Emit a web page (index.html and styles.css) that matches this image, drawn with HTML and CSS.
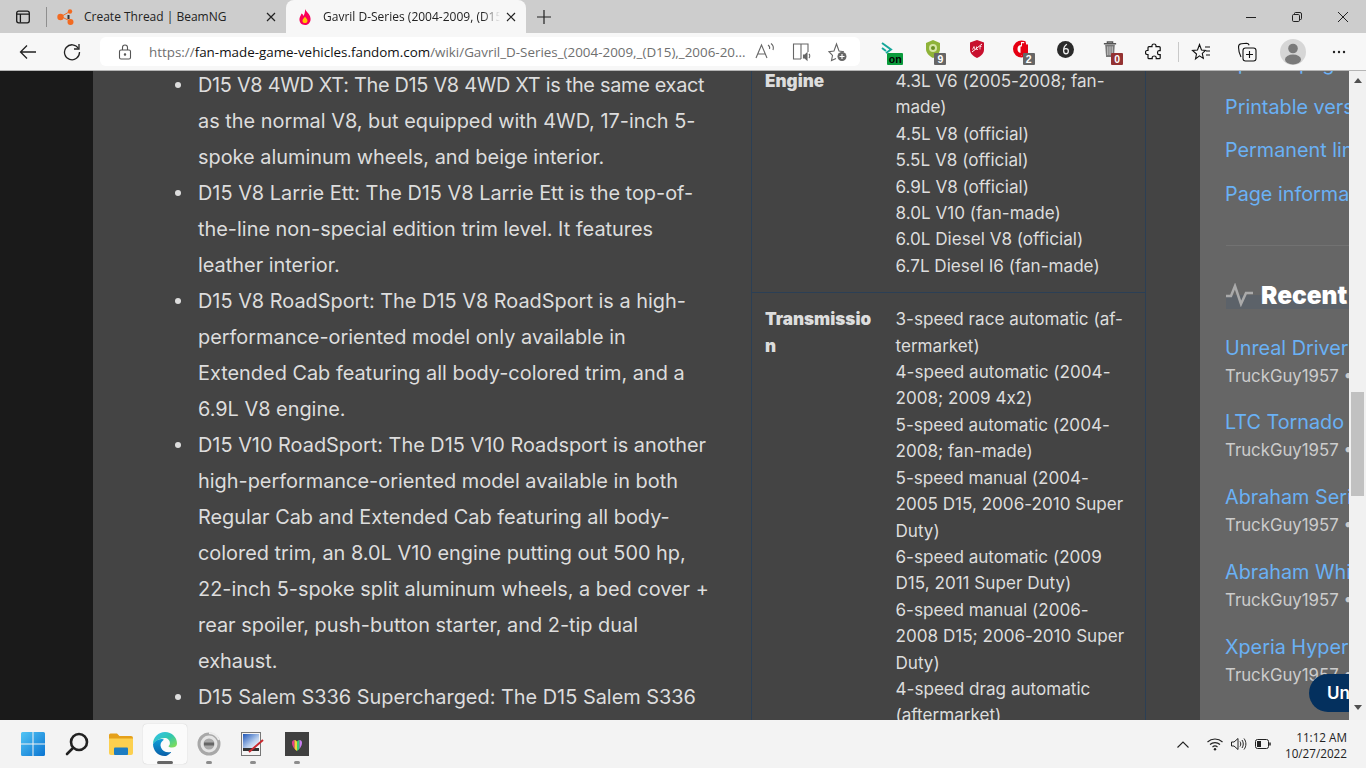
FILE: index.html
```html
<!DOCTYPE html>
<html lang="en">
<head>
<meta charset="utf-8">
<title>Gavril D-Series</title>
<link rel="stylesheet" href="styles.css">
</head>
<body>
<div class="tabstrip">
  <div class="strip-btn">
    <svg width="16" height="16" viewBox="0 0 16 16" fill="none" stroke="#1a1a1a" stroke-width="1.3"><rect x="1.7" y="2.2" width="12.6" height="11.6" rx="2"/><path d="M2 5.2h12M5.4 5.2v8.4"/></svg>
  </div>
  <div class="strip-sep"></div>
  <div class="tab">
    <svg class="favicon" width="18" height="18" viewBox="0 0 18 18"><circle cx="3.5" cy="9" r="3.2" fill="#f26a21"/><circle cx="13" cy="3.5" r="2.2" fill="#f26a21"/><circle cx="13.5" cy="14" r="3" fill="#f26a21"/><path d="M5 8l7-4M6 9.500l6 3" stroke="#f26a21" stroke-width="1"/><path d="M10.500 7h2v4h-2z" fill="#333"/></svg>
    <span class="tab-title">Create Thread | BeamNG</span>
    <svg class="tab-x" width="10" height="10" viewBox="0 0 10 10" stroke="#222" stroke-width="1.2"><path d="M1 1l8 8M9 1l-8 8"/></svg>
  </div>
  <div class="tab tab-active">
    <svg class="favicon" width="18" height="18" viewBox="0 0 18 18"><path d="M9 1c1 3 5 4.500 5.500 9.200C15 14 12.500 17 9 17s-6-2.800-5.500-6.500C3.800 8.500 5 7.500 5.500 5.500 6.700 6 7.200 7 7.300 8 8.500 6.500 9.300 3.500 9 1z" fill="#fa005a"/><path d="M9 8.500c.5 1.500 2.500 2.200 2.500 4.200 0 1.400-1.100 2.300-2.500 2.300s-2.500-.9-2.500-2.300c0-2 2-2.700 2.500-4.200z" fill="#ffc500"/></svg>
    <span class="tab-title">Gavril D-Series (2004-2009, (D15)</span>
    <svg class="tab-x" width="10" height="10" viewBox="0 0 10 10" stroke="#222" stroke-width="1.2"><path d="M1 1l8 8M9 1l-8 8"/></svg>
  </div>
  <div class="strip-btn new-tab">
    <svg width="16" height="16" viewBox="0 0 16 16" stroke="#222" stroke-width="1.2"><path d="M8 1v14M1 8h14"/></svg>
  </div>
  <div class="win-controls">
    <div class="win-btn"><svg width="10" height="10" viewBox="0 0 10 10" stroke="#222"><path d="M0 5.500h10"/></svg></div>
    <div class="win-btn"><svg width="10" height="10" viewBox="0 0 10 10" fill="none" stroke="#222"><rect x=".5" y="2.500" width="7" height="7" rx="1.200"/><path d="M2.500 2.500v-1a1 1 0 0 1 1-1h4.500a1.500 1.500 0 0 1 1.500 1.500v4.500a1 1 0 0 1-1 1h-1"/></svg></div>
    <div class="win-btn"><svg width="10" height="10" viewBox="0 0 10 10" stroke="#222"><path d="M0 0l10 10M10 0l-10 10"/></svg></div>
  </div>
</div>

<div class="toolbar">
  <div class="nav-btn nav-back"><svg width="18" height="16" viewBox="0 0 18 16" fill="none" stroke="#222" stroke-width="1.300"><path d="M17 8H1.500M8 1.500L1.500 8 8 14.500"/></svg></div>
  <div class="nav-btn"><svg width="18" height="18" viewBox="0 0 18 18" fill="none" stroke="#222" stroke-width="1.300"><path d="M15.500 5.500A7.500 7.500 0 1 0 16.500 9"/><path d="M16 1v5h-5"/></svg></div>
  <div class="address">
    <svg class="lock" width="14" height="16" viewBox="0 0 14 16" fill="none" stroke="#555" stroke-width="1.100"><rect x="1.500" y="6" width="11" height="9" rx="1.500"/><path d="M4.500 6V3.500a2.500 2.500 0 0 1 5 0V6"/><circle cx="7" cy="10.500" r=".7" fill="#555"/></svg>
    <span class="url"><span class="url-dim">https://</span>fan-made-game-vehicles.fandom.com<span class="url-dim">/wiki/Gavril_D-Series_(2004-2009,_(D15),_2006-20...</span></span>
    <div class="addr-icons">
      <div class="addr-icon"><svg width="22" height="20" viewBox="0 0 22 20" fill="none" stroke="#666" stroke-width="1.100"><path d="M1 16L6.500 3l5.500 13M3 12h7"/><path d="M13 3c1.500 1 2 2.500 1.500 4M16 1.500c2 1.500 2.800 4 2 6.500"/></svg></div>
      <div class="addr-icon"><svg width="20" height="20" viewBox="0 0 20 20" fill="none" stroke="#666" stroke-width="1.100"><path d="M9 17H1.500V2H16v8M9 2v15"/><path d="M11.500 13h1.500l2-2v7l-2-2h-1.500z" fill="#666"/><path d="M17 12c1 1 1 3 0 4"/></svg></div>
      <div class="addr-icon"><svg width="20" height="20" viewBox="0 0 20 20" fill="none" stroke="#666" stroke-width="1.100"><path d="M8 16.500l-4.500 2 1-5L1 9.700l5-.7L8.500 2l2.500 7 5 .7"/><circle cx="14" cy="14.500" r="4.500" fill="#666" stroke="none"/><path d="M14 12v5M11.500 14.500h5" stroke="#fff"/></svg></div>
    </div>
  </div>
  <div class="ext-group">
    <div class="ext">
      <svg width="16" height="14" viewBox="0 0 16 14" fill="none" stroke="#16a79a" stroke-width="2"><path d="M1 1l9 6.500L5 11M1 6l4 3"/></svg>
      <span class="badge badge-green">on</span>
    </div>
    <div class="ext">
      <svg width="16" height="18" viewBox="0 0 16 18"><path d="M8 0l7 3v6c0 4-3 7-7 9-4-2-7-5-7-9V3z" fill="#8fb339"/><circle cx="8" cy="8" r="4" fill="#d6e6a6"/><circle cx="8" cy="8" r="2" fill="#6a8f23"/></svg>
      <span class="badge badge-grey">9</span>
    </div>
    <div class="ext">
      <svg width="16" height="18" viewBox="0 0 16 18"><path d="M8 0l7 2.500v7c0 4-3 6.500-7 8.500-4-2-7-4.500-7-8.500v-7z" fill="#c8102e"/><path d="M3 12L13 4" stroke="#fff" stroke-width="1"/><path d="M3.500 9.500l1.500-3 1 3M7.500 6.500v3H9M12.500 6.500H11v3" stroke="#fff" stroke-width=".8" fill="none"/></svg>
    </div>
    <div class="ext">
      <svg width="18" height="18" viewBox="0 0 18 18"><circle cx="8.500" cy="9" r="8.500" fill="#e60012"/><circle cx="8.500" cy="9" r="4" fill="#fff"/><path d="M8 2h10v14H8z" fill="#f7f7f7"/><path d="M7.500 15V7.500c0-1.500 1.500-1.500 1.500-.5V4c0-1.500 2-1.500 2 0V3c0-1.500 2-1.500 2 0v2c0-1 2-1 2 0v8l-2 3H9z" fill="#e60012"/></svg>
      <span class="badge badge-grey">2</span>
    </div>
    <div class="ext">
      <svg width="17" height="17" viewBox="0 0 18 18"><circle cx="9" cy="9" r="9" fill="#2b2b2b"/><path d="M10.500 3.500C8 5 7 7.500 7 10c0 2 1 3.500 2.500 3.500S12 12.200 12 10.500 11 8 9.500 8 7.500 9 7.500 9" fill="none" stroke="#eee" stroke-width="1.400"/></svg>
    </div>
    <div class="ext">
      <svg width="14" height="18" viewBox="0 0 16 20"><path d="M1 4h14M5 4V2h6v2" stroke="#555" stroke-width="1.500" fill="none"/><path d="M2.500 5h11l-1 14h-9z" fill="#777"/><path d="M5.500 7v10M8 7v10M10.500 7v10" stroke="#ddd" stroke-width="1"/></svg>
      <span class="badge badge-red">0</span>
    </div>
    <div class="ext ext-plain">
      <svg width="18" height="18" viewBox="0 0 18 18" fill="none" stroke="#111" stroke-width="1.200"><path d="M7 2.500c0-2 4-2 4 0v1.200h3.200a1 1 0 0 1 1 1v3h-1.200c-2 0-2 4 0 4h1.200v3a1 1 0 0 1-1 1h-3v-1.200c0-2-4-2-4 0v1.200H4a1 1 0 0 1-1-1v-3.200H2c-2 0-2-4 0-4h1V4.700a1 1 0 0 1 1-1h3z"/></svg>
    </div>
  </div>
  <div class="tool-sep"></div>
  <div class="tool-group">
    <div class="tool"><svg width="20" height="18" viewBox="0 0 20 18" fill="none" stroke="#111" stroke-width="1.100"><path d="M8.500 1.500L10.500 7l4 .4-3.200 3 1 5-3.800-2.500L4.500 16l1-5-4-3.500 5-.5z"/><path d="M14 4h5M15 8h4M15 12h4"/></svg></div>
    <div class="tool"><svg width="20" height="20" viewBox="0 0 20 20" fill="none" stroke="#111" stroke-width="1.100"><path d="M4 15C2.500 12 1.500 8 1.500 5c0-2 1-3 3-3.200l5-.5c1.500 0 2.200.6 2.700 2"/><rect x="6" y="6" width="13" height="13" rx="2.500"/><path d="M12.500 9v7M9 12.500h7"/></svg></div>
    <div class="tool"><svg width="26" height="26" viewBox="0 0 26 26"><circle cx="13" cy="13" r="13" fill="#d6d6d6"/><circle cx="13" cy="9.500" r="4.800" fill="#7a7a7a"/><ellipse cx="13" cy="20.500" rx="8" ry="5" fill="#7a7a7a"/></svg></div>
    <div class="tool"><svg width="14" height="4" viewBox="0 0 14 4" fill="#222"><circle cx="2" cy="2" r="1.200"/><circle cx="7" cy="2" r="1.200"/><circle cx="12" cy="2" r="1.200"/></svg></div>
  </div>
</div>

<main class="viewport">
  <div class="gutter"></div>
  <div class="page">
    <article class="article">
      <ul class="trims">
        <li><span class="tight">D15 V8 4WD XT: The D15 V8 4WD XT is the same exact</span><br>as the normal V8, but equipped with 4WD, 17-inch 5-<br>spoke aluminum wheels, and beige interior.</li>
        <li>D15 V8 Larrie Ett: The D15 V8 Larrie Ett is the top-of-<br>the-line non-special edition trim level. It features<br>leather interior.</li>
        <li>D15 V8 RoadSport: The D15 V8 RoadSport is a high-<br>performance-oriented model only available in<br>Extended Cab featuring all body-colored trim, and a<br>6.9L V8 engine.</li>
        <li>D15 V10 RoadSport: The D15 V10 Roadsport is another<br>high-performance-oriented model available in both<br>Regular Cab and Extended Cab featuring all body-<br>colored trim, an 8.0L V10 engine putting out 500 hp,<br>22-inch 5-spoke split aluminum wheels, a bed cover +<br>rear spoiler, push-button starter, and 2-tip dual<br>exhaust.</li>
        <li>D15 Salem S336 Supercharged: The D15 Salem S336</li>
      </ul>
    </article>
    <table class="specs">
      <tr>
        <th>Engine</th>
        <td>4.3L V6 (2005-2008; fan-<br>made)<br>4.5L V8 (official)<br>5.5L V8 (official)<br>6.9L V8 (official)<br>8.0L V10 (fan-made)<br>6.0L Diesel V8 (official)<br>6.7L Diesel I6 (fan-made)</td>
      </tr>
      <tr>
        <th>Transmissio<br>n</th>
        <td>3-speed race automatic (af-<br>termarket)<br>4-speed automatic (2004-<br>2008; 2009 4x2)<br>5-speed automatic (2004-<br>2008; fan-made)<br>5-speed manual (2004-<br>2005 D15, 2006-2010 Super<br>Duty)<br>6-speed automatic (2009<br>D15, 2011 Super Duty)<br>6-speed manual (2006-<br>2008 D15; 2006-2010 Super<br>Duty)<br>4-speed drag automatic<br>(aftermarket)</td>
      </tr>
    </table>
    <aside class="rail">
      <ul class="tools-list">
        <li><a>Special pages</a></li>
        <li><a>Printable version</a></li>
        <li><a>Permanent link</a></li>
        <li><a>Page information</a></li>
      </ul>
      <hr class="rail-rule">
      <h2 class="recent-title">
        <svg width="27" height="24" viewBox="0 0 27 24" fill="none" stroke="#aaa" stroke-width="2.500"><path d="M0 13h5l4-10 6 18 5-11h7"/></svg>
        <span class="recent-text">Recent Wiki Activity</span>
      </h2>
      <div class="recent-item"><a>Unreal Driver</a><span>TruckGuy1957 • 1 day ago</span></div>
      <div class="recent-item"><a>LTC Tornado</a><span>TruckGuy1957 • 1 day ago</span></div>
      <div class="recent-item"><a>Abraham Series</a><span>TruckGuy1957 • 1 day ago</span></div>
      <div class="recent-item"><a>Abraham White</a><span>TruckGuy1957 • 1 day ago</span></div>
      <div class="recent-item"><a>Xperia Hyper</a><span>TruckGuy1957 • 1 day ago</span></div>
    </aside>
    <div class="float-pill">Unmute</div>
  </div>
  <div class="scrollbar">
    <div class="arrow arrow-up"></div>
    <div class="thumb"></div>
    <div class="arrow arrow-down"></div>
  </div>
</main>

<footer class="taskbar">
  <div class="task-apps">
    <div class="app">
      <svg width="24" height="24" viewBox="0 0 24 24"><defs><linearGradient id="win" x1="0" y1="0" x2="1" y2="1"><stop offset="0" stop-color="#52c5f5"/><stop offset="1" stop-color="#0a74d1"/></linearGradient></defs><path d="M0 1.500A1.500 1.500 0 0 1 1.500 0h10v11.500H0zM12.500 0h10A1.500 1.500 0 0 1 24 1.500v10H12.500zM0 12.500h11.500V24h-10A1.500 1.500 0 0 1 0 22.500zM12.500 12.500H24v10a1.500 1.500 0 0 1-1.500 1.500h-10z" fill="url(#win)"/></svg>
    </div>
    <div class="app">
      <svg width="24" height="24" viewBox="0 0 24 24" fill="none" stroke="#222" stroke-width="2.600"><circle cx="14" cy="10" r="8"/><path d="M8 16l-6 6" stroke-linecap="round"/></svg>
    </div>
    <div class="app">
      <svg width="24" height="22" viewBox="0 0 24 22"><path d="M0 2a1.500 1.500 0 0 1 1.500-1.500H8l2.500 2.500H22a2 2 0 0 1 2 2v1H0z" fill="#e5a01a"/><path d="M0 5.500h24V20a2 2 0 0 1-2 2H2a2 2 0 0 1-2-2z" fill="#fcd04f"/><rect x="5" y="14.500" width="14" height="7.500" rx="1" fill="#1d7dc2"/></svg>
    </div>
    <div class="app app-active">
      <svg width="24" height="24" viewBox="0 0 24 24"><defs><linearGradient id="edgeA" x1="0" y1="0" x2="1" y2="1"><stop offset="0" stop-color="#35c1f1"/><stop offset=".5" stop-color="#2fc7b0"/><stop offset="1" stop-color="#8fe04a"/></linearGradient><linearGradient id="edgeB" x1="0" y1="0" x2="0" y2="1"><stop offset="0" stop-color="#0f9fd8"/><stop offset="1" stop-color="#0a5fa8"/></linearGradient></defs><path d="M0 12C0 5 5.500 0 12 0c7 0 12 5.300 12 11.500 0 2.500-2 4-5 4-1.800 0-3-.5-3.600-1.300 1-.7 1.500-1.700 1.500-2.900C16.900 8 14.500 6 11.500 6 7 6 3 8.500 0 12z" fill="url(#edgeA)"/><path d="M0 12c2-3.500 6-5 9-5 2 0 2 1 1 1.500C7.500 10 7 13 8 15.500c1.200 3.500 5.500 5.500 9.500 4.500 1-.3.500.5 0 .9C15.500 23 13.700 24 11.500 24 5 24 0 18.500 0 12z" fill="url(#edgeB)"/></svg>
      <span class="run-bar run-bar-active"></span>
    </div>
    <div class="app">
      <svg width="24" height="24" viewBox="0 0 24 24"><circle cx="12" cy="12" r="11.500" fill="#a8a8a8"/><circle cx="12" cy="12" r="7" fill="none" stroke="#e4e4e4" stroke-width="3"/><path d="M7 12h10" stroke="#666" stroke-width="3"/><path d="M12 1a11 11 0 0 1 10 7" stroke="#ececec" stroke-width="2" fill="none"/></svg>
      <span class="run-bar"></span>
    </div>
    <div class="app">
      <svg width="24" height="24" viewBox="0 0 24 24"><defs><linearGradient id="pic" x1="0" y1="0" x2="1" y2="1"><stop offset="0" stop-color="#1d55b8"/><stop offset=".6" stop-color="#b8cfee"/><stop offset="1" stop-color="#fff"/></linearGradient></defs><rect x=".5" y=".5" width="19" height="23" fill="#f4f4f4" stroke="#777"/><rect x="2" y="2" width="16" height="14" fill="url(#pic)"/><rect x="2" y="16" width="16" height="3" fill="#333"/><path d="M22 8L8 20" stroke="#c8282e" stroke-width="2"/></svg>
      <span class="run-bar"></span>
    </div>
    <div class="app">
      <svg width="24" height="24" viewBox="0 0 24 24"><defs><clipPath id="heart"><path d="M12 19C8 16 7 13 7 10.500 7 7.500 10.500 7 12 9.500 13.500 7 17 7.500 17 10.500 17 13 16 16 12 19z"/></clipPath></defs><rect width="24" height="24" fill="#404040"/><g clip-path="url(#heart)"><rect x="7" y="7" width="2.500" height="12" fill="#e23b8e"/><rect x="9.500" y="7" width="2.500" height="12" fill="#f5d33c"/><rect x="12" y="7" width="2.500" height="12" fill="#3ecf6f"/><rect x="14.500" y="7" width="2.500" height="12" fill="#c77df0"/></g></svg>
      <span class="run-bar"></span>
    </div>
  </div>
  <div class="tray">
    <svg class="tray-chevron" width="12" height="7" viewBox="0 0 12 7" fill="none" stroke="#222" stroke-width="1.100"><path d="M.5 6.500L6 1l5.500 5.500"/></svg>
    <svg class="tray-icon" width="16" height="14" viewBox="0 0 16 14" fill="none" stroke="#222" stroke-width="1.100"><path d="M.5 5a11 11 0 0 1 15 0M3 7.500a7.500 7.500 0 0 1 10 0M5.500 10a3.800 3.800 0 0 1 5 0"/><circle cx="8" cy="12.300" r="1.200" fill="#222" stroke="none"/></svg>
    <svg class="tray-icon" width="16" height="14" viewBox="0 0 16 14" fill="none" stroke="#222" stroke-width="1"><path d="M.5 5h2.500L7 1.500v11L3 9H.5z"/><path d="M9 4.500c1 1.500 1 3.500 0 5M11 3c1.700 2.300 1.700 5.700 0 8M13 1.500c2.500 3.300 2.500 7.700 0 11"/></svg>
    <svg class="tray-icon" width="16" height="10" viewBox="0 0 16 10" fill="none" stroke="#222" stroke-width="1"><rect x=".5" y=".5" width="13" height="9" rx="2"/><rect x="2" y="2" width="4" height="6" fill="#222" stroke="none"/><path d="M15 3.500v3" stroke-width="1.500"/></svg>
    <div class="clock"><span>11:12 AM</span><span>10/27/2022</span></div>
  </div>
</footer>
</body>
</html>
```

FILE: styles.css
```css
* { box-sizing: border-box; }
html, body { margin: 0; height: 768px; overflow: hidden; }
body { display: flex; flex-direction: column; font-family: "Open Sans", "Noto Sans", sans-serif; }
ul { margin: 0; padding: 0; }

.tabstrip { height: 33px; background: #cdcdcd; display: flex; align-items: center; position: relative; font-size: 12px; color: #222; flex: none; }
.strip-btn { width: 46px; height: 33px; display: flex; align-items: center; justify-content: center; flex: none; }
.strip-sep { width: 1px; height: 20px; background: #8f8f8f; margin-right: 8px; flex: none; }
.tab { width: 231px; height: 33px; display: flex; align-items: center; padding: 0 10px 0 1px; flex: none; }
.tab .favicon { margin-right: 9px; margin-left: 1px; flex: none; }
.tab-title { flex: 1; white-space: nowrap; overflow: hidden; font-size: 12px; }
.tab-x { flex: none; margin-left: 6px; }
.tab-active { width: 240px; background: #f7f7f7; border-radius: 8px 8px 0 0; padding: 0 10px 0 10px; height: 33px; margin-top: 0; }
.tab-active .favicon { margin-right: 9px; margin-left: 0; }
.tab-active .tab-title { -webkit-mask-image: linear-gradient(to right, #000 90%, transparent); mask-image: linear-gradient(to right, #000 90%, transparent); }
.new-tab { width: 36px; }
.win-controls { display: flex; margin-left: auto; }
.win-btn { width: 46px; height: 33px; display: flex; align-items: center; justify-content: center; }

.toolbar { height: 38px; background: #f7f7f7; border-bottom: 1px solid #b5b5b5; display: flex; align-items: center; flex: none; }
.nav-btn { width: 44px; height: 37px; display: flex; align-items: center; justify-content: center; flex: none; }
.nav-back { width: 50px; padding-left: 6px; }
.address { width: 760px; height: 29px; margin-left: 6px; background: #fff; border-radius: 6px; display: flex; align-items: center; padding-left: 18px; flex: none; }
.lock { flex: none; margin-right: 17px; }
.url { font-size: 13.400px; color: #111; white-space: nowrap; font-family: "Open Sans", sans-serif; }
.url-dim { color: #6f6f6f; }
.addr-icons { display: flex; margin-left: auto; padding-right: 4px; }
.addr-icon { width: 36px; height: 24px; display: flex; align-items: center; justify-content: center; }
.ext-group { display: flex; margin-left: 7px; }
.ext { width: 44.200px; height: 37px; display: flex; align-items: center; justify-content: center; position: relative; }
.ext svg { margin-bottom: 5px; }
.ext-plain svg { margin-bottom: 0; }
.badge { position: absolute; right: 9px; bottom: 5px; width: 12px; height: 12px; border-radius: 1px; color: #fff; font-size: 10.500px; font-weight: 700; line-height: 12px; text-align: center; font-family: "Liberation Sans", sans-serif; }
.badge-green { background: #0a9b3c; color: #000; right: 8px; width: 16px; }
.badge-grey { background: #666; }
.badge-red { background: #943232; }
.tool-sep { width: 1px; height: 20px; background: #c9c9c9; margin-left: 2px; flex: none; }
.tool-group { display: flex; margin-left: -1px; }
.tool { width: 46px; height: 37px; display: flex; align-items: center; justify-content: center; }

.viewport { height: 649px; display: flex; flex: none; overflow: hidden; position: relative; }
.gutter { width: 93px; background: #1a1a1a; flex: none; }
.page { width: 1256px; background: #444; display: flex; align-items: flex-start; overflow: hidden; position: relative; flex: none; height: 649px; }
.article { width: 658px; flex: none; overflow: hidden; height: 649px; color: #ddd; font-family: Inter, "Open Sans", sans-serif; font-size: 19.900px; line-height: 36px; font-feature-settings: "calt" 0; }
.trims { margin-top: -4px; padding-left: 105px; list-style: none; white-space: nowrap; }
.trims li { position: relative; }
.trims li::before { content: ""; position: absolute; left: -23px; top: 15px; width: 6px; height: 6px; border-radius: 50%; background: #ddd; }
.tight { letter-spacing: -.3px; }

.specs { width: 395px; flex: none; margin-top: -16px; border-collapse: collapse; table-layout: fixed; color: #ddd; border-left: 1px solid #2b3f55; border-right: 1px solid #2b3f55; font-family: Inter, "Open Sans", sans-serif; font-size: 17.100px; line-height: 26.400px; white-space: nowrap; font-feature-settings: "calt" 0; }
.specs th { width: 131px; text-align: left; vertical-align: top; padding: 13px 0 13px 13px; font-weight: 900; overflow: hidden; }
.specs td { vertical-align: top; padding: 13px 0 13px 13px; }
.specs tr + tr th, .specs tr + tr td { border-top: 1px solid #2b3f55; }

.rail { width: 149px; margin-left: 54px; flex: none; height: 649px; background: #666; overflow: hidden; white-space: nowrap; padding-left: 26px; font-family: Inter, "Open Sans", sans-serif; }
.rail a { color: #6ab1f5; font-size: 19.800px; line-height: 26px; display: block; margin-left: -1px; }
.tools-list { list-style: none; margin-top: -21px; }
.tools-list li { margin-bottom: 17.500px; }
.rail-rule { border: 0; height: 1px; background: #727272; margin: 38px 0 0; width: 123px; }
.recent-title { margin: 35px 0 0; display: flex; align-items: center; gap: 8px; height: 28px; color: #fff; font-size: 24.500px; font-weight: 900; background: linear-gradient(to bottom, transparent 50%, #5c6269 50%); }
.recent-title svg { flex: none; }
.recent-text { line-height: 28px; flex: none; }
.recent-item { margin-bottom: 21.800px; }
.recent-title + .recent-item { margin-top: 26px; }
.recent-item span { display: block; color: #ccc; font-size: 16.800px; line-height: 24px; margin-top: 3px; margin-left: -1px; }
.float-pill { position: absolute; left: 1216px; top: 603px; width: 80px; height: 38px; border-radius: 19px; background: #04305e; color: #fff; font-family: Inter, sans-serif; font-size: 17px; font-weight: 600; line-height: 38px; padding-left: 18px; white-space: nowrap; }

.scrollbar { width: 17px; background: #f1f1f1; position: relative; flex: none; display: flex; flex-direction: column; align-items: center; height: 649px; }
.arrow { width: 0; height: 0; border-left: 4px solid transparent; border-right: 4px solid transparent; flex: none; }
.arrow-up { border-bottom: 5px solid #505050; margin-top: 7px; }
.arrow-down { border-top: 5px solid #505050; margin-top: 209px; }
.thumb { width: 13px; height: 104px; background: #c1c1c1; margin-top: 309px; flex: none; }

.taskbar { height: 48px; background: #f3f3f3; display: flex; align-items: center; justify-content: space-between; flex: none; }
.task-apps { display: flex; margin-left: 11px; }
.app { width: 44px; height: 40px; display: flex; align-items: center; justify-content: center; position: relative; border-radius: 4px; }
.app-active { background: #fbfbfb; box-shadow: 0 0 1px rgba(0,0,0,.25); }
.run-bar { position: absolute; left: 19px; bottom: 0; width: 6px; height: 3px; border-radius: 2px; background: #8c8c8c; }
.run-bar-active { left: 14px; width: 16px; background: #666; }
.tray { display: flex; align-items: center; padding-right: 19px; }
.tray-chevron { margin-right: 18px; }
.tray-icon { margin-right: 8px; }
.clock { display: flex; flex-direction: column; align-items: flex-end; margin-left: 6px; padding-top: 2px; font-size: 11.700px; line-height: 16px; color: #222; font-family: "Open Sans", sans-serif; }
```
